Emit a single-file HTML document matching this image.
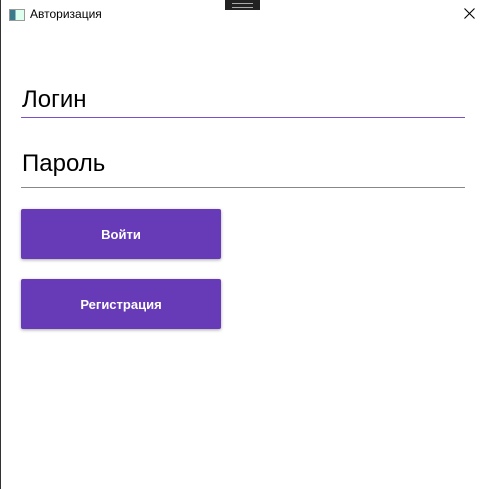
<!DOCTYPE html>
<html><head><meta charset="utf-8"><style>
body{margin:0;width:483px;height:489px;background:#fff;position:relative;overflow:hidden;font-family:"Liberation Sans",sans-serif}
.lb{position:absolute;left:0;top:0;width:1px;height:489px;background:#333}
.t{position:absolute;left:30px;top:7px;font-size:12px;color:#000}
.ic{position:absolute;left:9px;top:9px;width:14px;height:10px;border:1px solid #999;background:linear-gradient(90deg,#3a7a8a 40%,#dfe 40%)}
.grip{position:absolute;left:225px;top:0;width:35px;height:10px;background:#222}
.grip:after{content:"";position:absolute;left:7px;top:3px;width:21px;height:3px;border-top:1px solid #aaa;border-bottom:1px solid #aaa}
.x{position:absolute;left:464px;top:8px}
.in{position:absolute;left:22px;font-size:24px;color:#000}
.ln{position:absolute;left:21px;width:444px;height:1px}
.b{position:absolute;left:21px;width:200px;height:50px;background:#673ab7;color:#fff;font-weight:bold;font-size:13px;display:flex;align-items:center;justify-content:center;border-radius:2px;box-shadow:0 1px 3px rgba(0,0,0,.35)}
</style></head><body>
<div class="lb"></div><div class="ic"></div><div class="t">Авторизация</div><div class="grip"></div>
<svg class="x" width="11" height="11" viewBox="0 0 11 11"><path d="M0.5 0.5L10.5 10.5M10.5 0.5L0.5 10.5" stroke="#000" stroke-width="1.1"/></svg>
<div class="in" style="top:86px">Логин</div><div class="ln" style="top:117px;background:#7b4fc8"></div>
<div class="in" style="top:150px">Пароль</div><div class="ln" style="top:187px;background:#888"></div>
<div class="b" style="top:209px">Войти</div>
<div class="b" style="top:279px">Регистрация</div>
</body></html>
